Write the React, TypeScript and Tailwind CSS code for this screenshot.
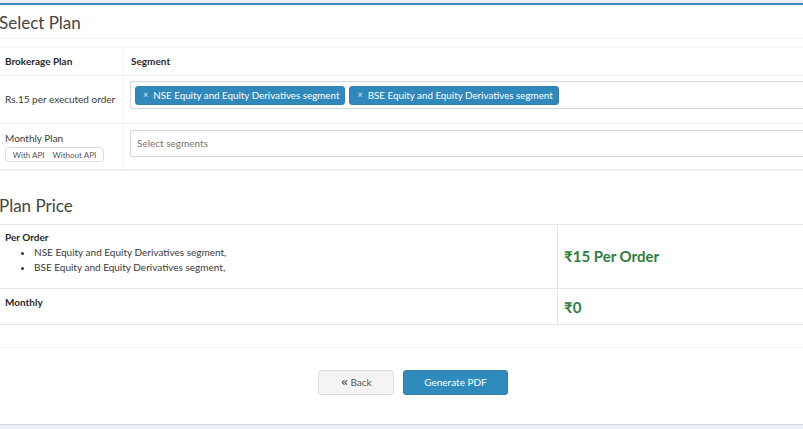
import { ChevronsLeft } from 'lucide-react'

const font = { fontFamily: 'Lato, "Noto Sans", sans-serif' }

function Tag({ label }: { label: string }) {
  return (
    <span className="flex h-[19px] items-center gap-[5px] rounded-[3px] border border-[#367fa9] bg-[#3189bb] pl-[7px] pr-[5px] text-[9.8px] text-white">
      <span className="text-[9px] text-white/80">×</span>
      {label}
    </span>
  )
}

export default function App() {
  return (
    <div className="h-[429px] w-[803px] overflow-hidden bg-[#ecf0f5] text-[#2a2a2a]" style={font}>
      <div className="mt-[3px] w-[826px] border-t-[2px] border-[#3c8dbc] bg-white">
        {/* box header */}
        <div className="h-[34px] border-b border-[#f4f4f4] pt-[8px]">
          <h3 className="-ml-[1px] text-[17px] leading-[20px] text-[#444]">Select Plan</h3>
        </div>

        {/* brokerage table */}
        <div className="mt-[8px] border-t border-[#f4f4f4]">
          <div className="grid h-[28px] grid-cols-[124px_1fr] border-b border-[#f0f0f0]">
            <div className="flex items-center border-r border-[#f4f4f4] pl-[5px] text-[10px] font-bold">Brokerage Plan</div>
            <div className="flex items-center pl-[7px] text-[10px] font-bold">Segment</div>
          </div>
          <div className="grid h-[48px] grid-cols-[124px_1fr] border-b border-[#f0f0f0]">
            <div className="flex items-center border-r border-[#f4f4f4] pl-[5px] text-[10px] text-[#3a3a3a]">Rs.15 per executed order</div>
            <div className="pl-[6px] pt-[5px]">
              <div className="flex h-[28px] items-center gap-[4px] rounded-l-[3px] border border-r-0 border-[#d2d6de] pl-[4px]">
                <Tag label="NSE Equity and Equity Derivatives segment" />
                <Tag label="BSE Equity and Equity Derivatives segment" />
              </div>
            </div>
          </div>
          <div className="grid h-[47px] grid-cols-[124px_1fr] border-b-2 border-[#f0f0f0]">
            <div className="flex flex-col border-r border-[#f4f4f4] pl-[5px] pt-[8px]">
              <span className="text-[10px] leading-[13px] text-[#3a3a3a]">Monthly Plan</span>
              <div className="mt-[2px] flex h-[15px] w-[99px] items-center justify-center gap-[8px] rounded-[4px] border border-[#ddd] text-[8px] text-[#555]">
                <span>With API</span>
                <span>Without API</span>
              </div>
            </div>
            <div className="pl-[6px] pt-[6px]">
              <div className="flex h-[27px] items-center rounded-l-[3px] border border-r-0 border-[#d2d6de] pl-[6px] text-[10px] text-[#777]">
                Select segments
              </div>
            </div>
          </div>
        </div>

        {/* plan price */}
        <div className="h-[53px] pt-[25px]">
          <h3 className="-ml-[1px] text-[17px] leading-[20px] text-[#444]">Plan Price</h3>
        </div>
        <div className="border-t border-[#e6e6e6]">
          <div className="grid h-[64px] grid-cols-[558px_1fr] border-b border-[#e6e6e6]">
            <div className="border-r border-[#e6e6e6] pl-[5px] pt-[6px] text-[10px]">
              <div className="font-bold leading-[13px]">Per Order</div>
              <ul className="mt-[1px] list-disc pl-[29px] leading-[15px] text-[#3a3a3a]">
                <li>NSE Equity and Equity Derivatives segment,</li>
                <li>BSE Equity and Equity Derivatives segment,</li>
              </ul>
            </div>
            <div className="flex items-center pl-[6px] text-[15px] font-bold text-[#2e7d3c]">₹15 Per Order</div>
          </div>
          <div className="grid h-[36px] grid-cols-[558px_1fr] border-b border-[#e6e6e6]">
            <div className="border-r border-[#e6e6e6] pl-[5px] pt-[6px] text-[10px] font-bold">Monthly</div>
            <div className="flex items-center pl-[6px] pt-[1px] text-[15px] font-bold text-[#2e7d3c]">₹0</div>
          </div>
        </div>

        {/* footer */}
        <div className="mt-[22px] flex h-[77px] justify-center gap-[9px] border-t border-[#f4f4f4] pt-[22px]">
          <button className="flex h-[25px] w-[76px] items-center justify-center gap-[1px] rounded-[3px] border border-[#ddd] bg-[#f4f4f4] text-[10px] text-[#555]">
            <ChevronsLeft size={9} strokeWidth={3} />
            Back
          </button>
          <button className="flex h-[25px] w-[105px] items-center justify-center rounded-[3px] border border-[#367fa9] bg-[#2f8bbb] text-[10px] text-white">
            Generate PDF
          </button>
        </div>
      </div>
      <div className="h-[1px] bg-[#d2d6de]" />
    </div>
  )
}
